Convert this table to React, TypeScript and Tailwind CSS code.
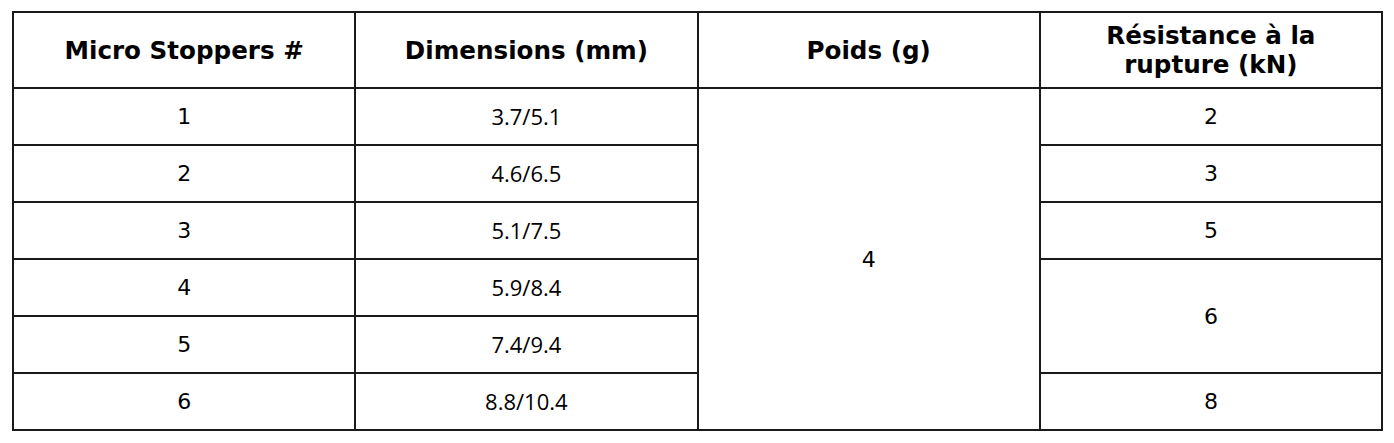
const rows = [
  { n: '1', dim: '3.7/5.1' },
  { n: '2', dim: '4.6/6.5' },
  { n: '3', dim: '5.1/7.5' },
  { n: '4', dim: '5.9/8.4' },
  { n: '5', dim: '7.4/9.4' },
  { n: '6', dim: '8.8/10.4' },
];

const cell = 'border-2 border-[#1a1a1a] text-center align-middle p-0';
const verdana = "font-['DejaVu_Sans',Verdana,sans-serif]";
const head = `${cell} ${verdana} text-[24.6px] font-bold leading-[29px] text-black`;
const body = `${cell} ${verdana} text-[22px] text-black`;
const dims = `${cell} font-['Open_Sans',sans-serif] text-[22px] text-black`;

export default function App() {
  return (
    <div className="bg-white w-[1394px] h-[443px] pt-[11px] pl-[12px]">
      <table className="w-[1371px] border-collapse table-fixed">
        <thead>
          <tr className="h-[76px]">
            <th className={head}>Micro Stoppers #</th>
            <th className={head}>Dimensions (mm)</th>
            <th className={head}>Poids (g)</th>
            <th className={head}>
              Résistance à la
              <br />
              rupture (kN)
            </th>
          </tr>
        </thead>
        <tbody>
          {rows.map((r, i) => (
            <tr key={r.n} className="h-[57px]">
              <td className={body}>{r.n}</td>
              <td className={dims}>{r.dim}</td>
              {i === 0 && (
                <td rowSpan={6} className={body}>
                  4
                </td>
              )}
              {i === 0 && <td className={body}>2</td>}
              {i === 1 && <td className={body}>3</td>}
              {i === 2 && <td className={body}>5</td>}
              {i === 3 && (
                <td rowSpan={2} className={body}>
                  6
                </td>
              )}
              {i === 5 && <td className={body}>8</td>}
            </tr>
          ))}
        </tbody>
      </table>
    </div>
  );
}
